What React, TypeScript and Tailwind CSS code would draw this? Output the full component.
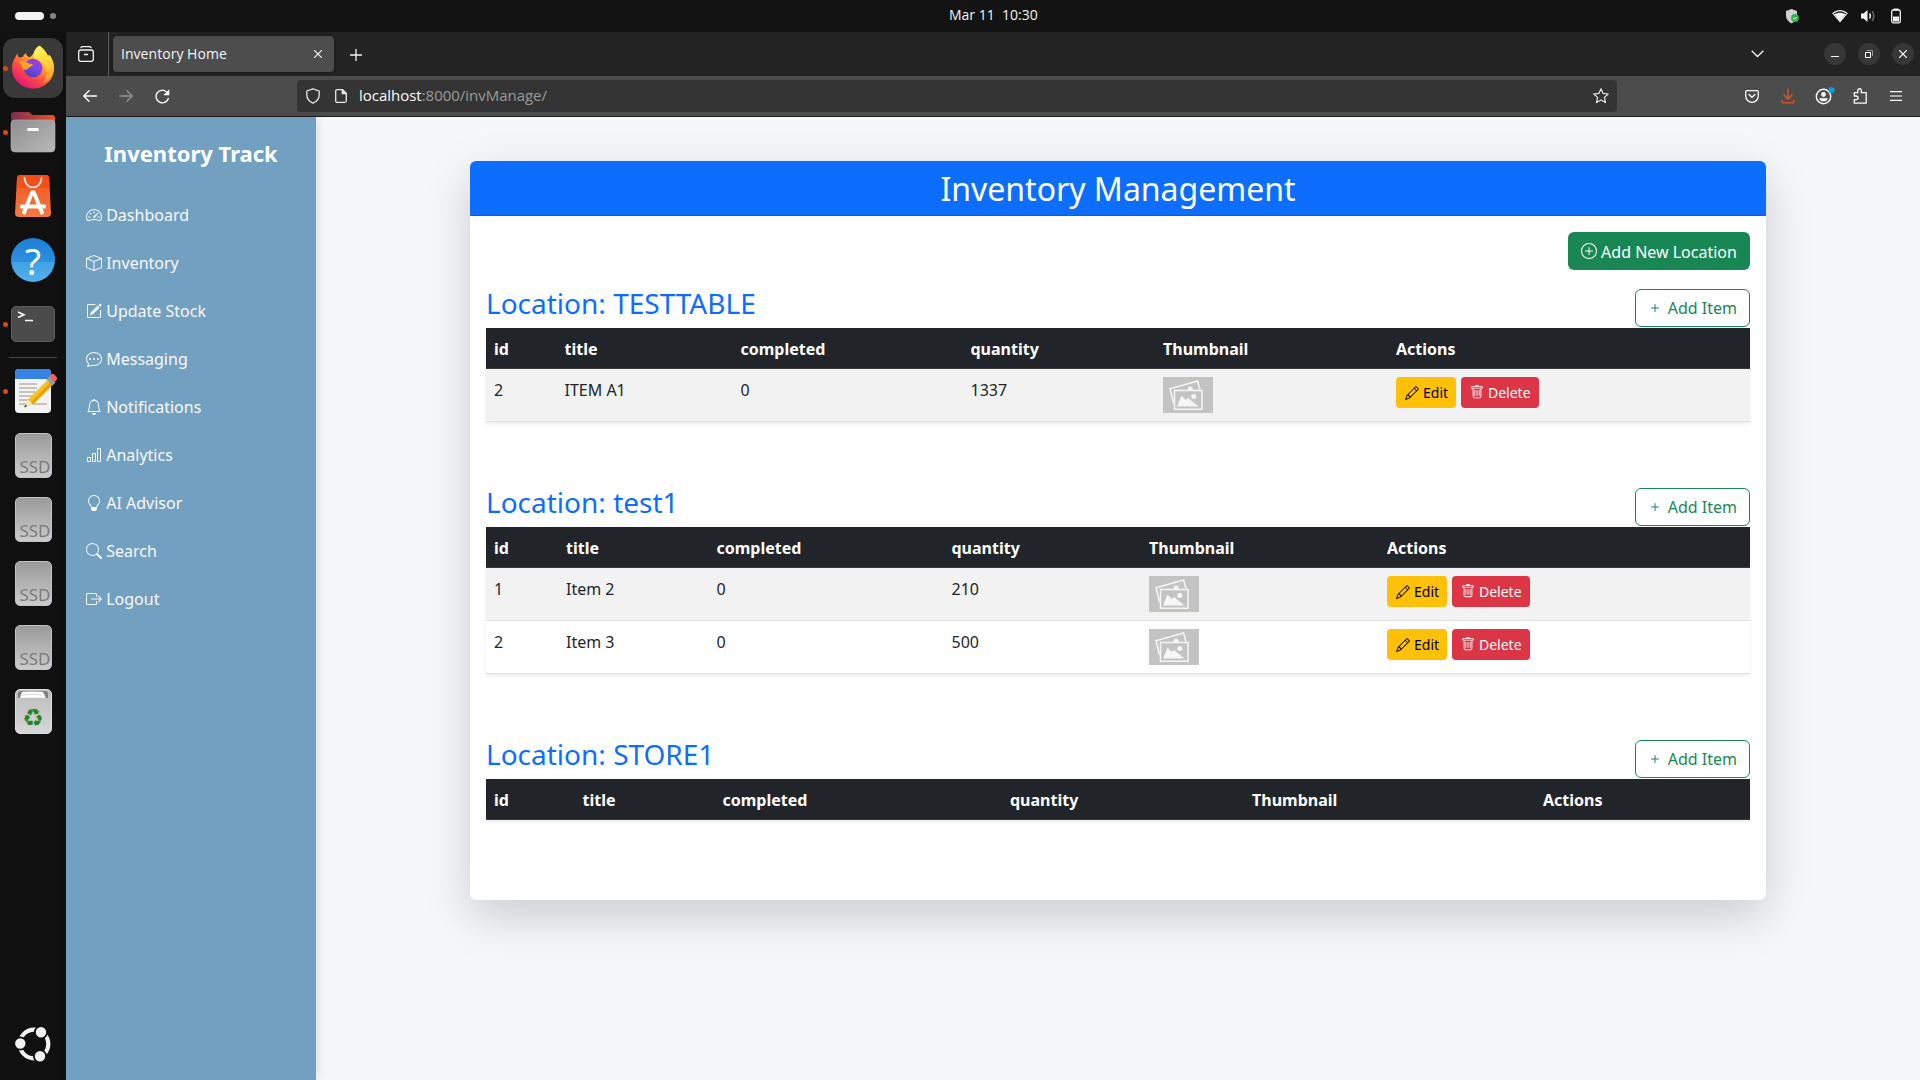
import {
  BsBarChart, BsBell, BsBoxArrowRight, BsBox, BsChatDots, BsLightbulb, BsPencil, BsPencilSquare,
  BsPlus, BsPlusCircle, BsSearch, BsSpeedometer2, BsTrash,
} from "react-icons/bs";
import type { ReactNode } from "react";

const NAV = [
  { label: "Dashboard", Icon: BsSpeedometer2 },
  { label: "Inventory", Icon: BsBox },
  { label: "Update Stock", Icon: BsPencilSquare },
  { label: "Messaging", Icon: BsChatDots },
  { label: "Notifications", Icon: BsBell },
  { label: "Analytics", Icon: BsBarChart },
  { label: "AI Advisor", Icon: BsLightbulb },
  { label: "Search", Icon: BsSearch },
  { label: "Logout", Icon: BsBoxArrowRight },
];

type Row = { id: number; title: string; completed: number; quantity: number };
type Location = { name: string; cols: number[]; rows: Row[] };

const LOCATIONS: Location[] = [
  {
    name: "TESTTABLE",
    cols: [70.5, 176, 230, 192.5, 233, 362],
    rows: [{ id: 2, title: "ITEM A1", completed: 0, quantity: 1337 }],
  },
  {
    name: "test1",
    cols: [72, 150.5, 235, 197.5, 238, 371],
    rows: [
      { id: 1, title: "Item 2", completed: 0, quantity: 210 },
      { id: 2, title: "Item 3", completed: 0, quantity: 500 },
    ],
  },
  { name: "STORE1", cols: [88.5, 140, 287.5, 242, 291, 215], rows: [] },
];

const HEADERS = ["id", "title", "completed", "quantity", "Thumbnail", "Actions"];

function TopBar() {
  return (
    <header className="flex h-8 items-center bg-[#131313] pl-[15px] pr-[19px] text-[#f2f2f2]">
      <div className="flex w-[934px] items-center gap-1.5">
        <span className="h-2 w-[29px] rounded-full bg-[#f2f2f2]" />
        <span className="size-1.5 rounded-full bg-[#858585]" />
      </div>
      <div className="w-[110px] whitespace-pre pb-[2px] text-sm leading-none">Mar 11  10:30</div>
      <div className="ml-auto flex items-center">
        <svg width="15" height="16" viewBox="0 0 15 16" className="mr-[32px]">
          <path d="M6.5 1 12 3v4.500c0 3.500-2 6-5.500 8C3 13.500 1 11 1 7.500V3z" fill="#d0d0d0" />
          <circle cx="10" cy="10" r="3.900" fill="#2fb344" />
          <path d="m8.200 10 1.300 1.200 2.200-2.300" fill="none" stroke="#fff" strokeWidth="1" />
        </svg>
        <svg width="16" height="14" viewBox="0 0 16 14" className="mr-[12px]">
          <path d="M1 4.300C5 .7 11 .7 15 4.300L8 12.500z" fill="none" stroke="#f2f2f2" strokeWidth="1.200" strokeLinejoin="round" />
          <path d="M2.700 5.200C5.500 3.200 10.500 3.200 13.300 5.200L8 12.500z" fill="#f2f2f2" />
        </svg>
        <svg width="16" height="14" viewBox="0 0 16 14" className="mr-[15px]">
          <path d="M1 4.500h2.500L7.500 1v12L3.500 9.500H1z" fill="#f2f2f2" />
          <path d="M9.500 4.500q1.800 2.500 0 5" fill="none" stroke="#f2f2f2" strokeWidth="1.400" />
          <path d="M12 2.200q3.600 4.800 0 9.600" fill="none" stroke="#6e6e6e" strokeWidth="1.400" />
        </svg>
        <svg width="10" height="16" viewBox="0 0 10 16">
          <rect x="2.500" y="0.500" width="5" height="2" fill="#f2f2f2" />
          <rect x=".7" y="2" width="8.600" height="12.800" rx="1.600" fill="none" stroke="#f2f2f2" strokeWidth="1.300" />
          <path d="M2 8.500h6v5H2z" fill="#f2f2f2" />
        </svg>
      </div>
    </header>
  );
}

function Slot({ children, active, dot, className = "" }: { children: ReactNode; active?: boolean; dot?: boolean; className?: string }) {
  return (
    <div className={"relative flex h-16 w-full shrink-0 items-center justify-center " + className}>
      {active && <span className="absolute left-[3px] top-[2px] size-[60px] rounded-xl bg-[#393939]" />}
      {dot && <span className="absolute left-[3px] top-[30px] size-[5px] rounded-full bg-[#dd4814]" />}
      <span className="relative flex">{children}</span>
    </div>
  );
}

function FirefoxIcon() {
  return (
    <svg width="44" height="46" viewBox="0 0 44 46" className="mb-[2px]">
      <defs>
        <linearGradient id="fxBody" x1=".85" y1=".1" x2=".25" y2=".95">
          <stop offset="0" stopColor="#fff44f" />
          <stop offset=".35" stopColor="#ffa930" />
          <stop offset=".65" stopColor="#ff4f3d" />
          <stop offset="1" stopColor="#e5157a" />
        </linearGradient>
        <linearGradient id="fxGlobe" x1=".7" y1="0" x2=".3" y2="1">
          <stop offset="0" stopColor="#a938d8" />
          <stop offset=".5" stopColor="#7547ee" />
          <stop offset="1" stopColor="#4a3fb5" />
        </linearGradient>
        <linearGradient id="fxFlame" x1=".4" y1="0" x2=".7" y2="1">
          <stop offset="0" stopColor="#fff25a" />
          <stop offset=".6" stopColor="#ffcb36" />
          <stop offset="1" stopColor="#ff9126" />
        </linearGradient>
      </defs>
      <path d="M6 9.500c.5 2 1.300 3.300 2.700 4.200 1.300-.8 2.600-1.200 4-1.300C11.300 12.300 14 10 15 9c.2 2.500 1.800 4 4 4.300L29 3c6 4 8 8 8.500 10l1.200-2C42 16 43 20 43 24.500 43 36 33.500 44.500 22 44.500S1 35.500 1 24c0-5 1.500-8.500 3.500-11z" fill="url(#fxBody)" />
      <path d="M28.500 1.500c3.500 2.500 7.500 7 8.300 11.500l1-2.500C42 15 43.500 22 42.500 27c-1.500 7-6.500 11-11.500 12 4-3 5.500-8 4.500-13-1-5-4-8-8-9.500-3-1-5-2-5-5.500 0-4 3-8 6-9.500z" fill="url(#fxFlame)" />
      <circle cx="22" cy="24" r="9.300" fill="url(#fxGlobe)" />
      <path d="M8 18c3-1.300 5.500-1 8 .5 2.500 1.600 4 1.500 6 1.700-.5 2-3.500 2.500-4.500 3.800-1.500 2.200-4.500 2-5.500 1.500C11 21 9 19.500 8 18z" fill="#ffa52b" />
    </svg>
  );
}

function FilesIcon() {
  return (
    <svg width="46" height="42" viewBox="0 0 46 42">
      <defs>
        <linearGradient id="fBack" x1="0" x2="1"><stop offset="0" stopColor="#7e2a55" /><stop offset="1" stopColor="#e95420" /></linearGradient>
        <linearGradient id="fFront" x1="0" y1="0" x2="1" y2="1"><stop offset="0" stopColor="#8e8e8e" /><stop offset="1" stopColor="#b9b9b9" /></linearGradient>
      </defs>
      <path d="M1 14V4a3 3 0 0 1 3-3h14q2 0 3 1.500T24 4h18a3 3 0 0 1 3 3v8z" fill="url(#fBack)" />
      <rect x="1" y="9" width="44" height="32" rx="4" fill="url(#fFront)" stroke="#b5b5b5" strokeWidth=".6" />
      <rect x="17" y="17" width="12" height="3" rx="1.500" fill="#fff" />
    </svg>
  );
}

function StoreIcon() {
  return (
    <svg width="36" height="42" viewBox="0 0 36 42">
      <defs><linearGradient id="bag" x1="0" y1="0" x2="0" y2="1"><stop offset="0" stopColor="#f4511e" /><stop offset="1" stopColor="#f37b43" /></linearGradient></defs>
      <path d="M5 0h26q3 0 3.200 3L36 38q0 4-4 4H4q-4 0-4-4L2 3Q2 0 5 0z" fill="url(#bag)" />
      <path d="M2 2.500Q2.200 0 5 0h26q2.800 0 3.200 2.500L34.500 13H1.500z" fill="#f04a12" opacity=".6" />
      <path d="M9.500 2.500c0 13 17 13 17 0" fill="none" stroke="#f9e6dd" strokeWidth="1.700" strokeLinecap="round" />
      <path d="M8.500 39 17 17.500h2L27.500 39" fill="none" stroke="#fff" strokeWidth="3.800" strokeLinejoin="round" />
      <rect x="5" y="29.500" width="26" height="4" rx="1.500" fill="#fff" />
    </svg>
  );
}

function HelpIcon() {
  return (
    <span className="flex size-11 items-center justify-center rounded-full bg-[linear-gradient(#1c7fd6_0%,#2a90df_54%,#3fa2e3_55%,#53b1ec_100%)] pt-px font-['Noto_Sans'] text-[37px] leading-none text-white">?</span>
  );
}

function TerminalIcon() {
  return (
    <span className="flex h-9 w-11 rounded-[5px] border border-[#5e5e5e] bg-[#4b4b4b] pl-[5px] pt-[3px]">
      <svg width="16" height="13" viewBox="0 0 16 13" fill="none" stroke="#fff" strokeWidth="1.600">
        <path d="m1 2 6 2.700L1 7.500M8 10.500h8" />
      </svg>
    </span>
  );
}

function EditorIcon() {
  return (
    <svg width="44" height="46" viewBox="0 0 44 46">
      <rect x="1" y="1" width="36" height="44" rx="4" fill="#f3f3f3" />
      <path d="M1 11V5a4 4 0 0 1 4-4h28a4 4 0 0 1 4 4v6z" fill="#3584e4" />
      <path d="M5 16h18M5 20h18M5 24h16M5 28h13M5 32h11M5 36h28" stroke="#c9c4b8" strokeWidth="1.800" />
      <path d="m14 31.500 20.500-20.500 5 5L19 36.500z" fill="#f6c31c" />
      <path d="m17 34 20-20.500 2.500 2.500L19 36.500z" fill="#e5a50a" />
      <path d="m14 31.500 5 5-9 3z" fill="#f8e6ac" />
      <path d="m11.500 36.500 1.700 1.800-3.200 1.200z" fill="#3d3846" />
      <path d="m32.500 11.500 3-3 6 6-3 3z" fill="#9a9996" />
      <path d="m35 8.500 1.500-2q2-1.500 4 .300l1.500 1.500q2 2 .2 4l-1.700 1.700z" fill="#f66060" />
    </svg>
  );
}

function SsdIcon() {
  return (
    <span className="flex h-[45px] w-[37px] items-end justify-end rounded-[5px] border border-[#c4c4c4] bg-linear-to-b from-[#9a9a9a] to-[#cbcbcb] pb-[2px] font-['Noto_Sans'] text-[17px] leading-none text-[#7c7c7c]">
      SSD
    </span>
  );
}

function TrashIcon() {
  return (
    <span className="flex h-[45px] w-[37px] flex-col items-center rounded-[5px] border border-[#e0e0e0] bg-linear-to-b from-[#bdbdbd] to-[#d6d6d6]">
      <svg width="30" height="9" viewBox="0 0 30 9">
        <path d="M0 8V4q0-3 3-3h24q3 0 3 3v4z" fill="#7d7d7d" />
        <path d="M2 8 4 2q10-1 21 0l3 6z" fill="#fff" stroke="#c8c8c8" strokeWidth=".6" />
        <path d="M4 5q10-1.500 20 0" fill="none" stroke="#bbb" strokeWidth=".6" />
      </svg>
      <span className="mt-[8px] font-['DejaVu_Sans'] text-[24px] leading-[22px] text-[#26871e]">♻</span>
    </span>
  );
}

function UbuntuLogo() {
  return (
    <svg width="38" height="38" viewBox="0 0 38 38">
      <circle cx="20" cy="19" r="14.300" fill="none" stroke="#f2f2f2" strokeWidth="4.200" />
      <g fill="#f2f2f2" stroke="#101010" strokeWidth="1.800">
        <circle cx="6.300" cy="18.500" r="6.100" />
        <circle cx="27" cy="7.200" r="6.100" />
        <circle cx="26" cy="31.200" r="6.100" />
      </g>
    </svg>
  );
}

function Dock() {
  return (
    <aside className="flex w-[66px] shrink-0 flex-col items-center bg-[#101010] pt-1">
      <Slot active dot><FirefoxIcon /></Slot>
      <Slot dot><FilesIcon /></Slot>
      <Slot><StoreIcon /></Slot>
      <Slot><HelpIcon /></Slot>
      <Slot dot><TerminalIcon /></Slot>
      <span className="mb-px mt-[1px] h-px w-12 shrink-0 bg-[#4a4a4a]" />
      <Slot dot><span className="mb-px ml-[6px] flex"><EditorIcon /></span></Slot>
      <Slot><SsdIcon /></Slot>
      <Slot><SsdIcon /></Slot>
      <Slot><SsdIcon /></Slot>
      <Slot><SsdIcon /></Slot>
      <Slot><TrashIcon /></Slot>
      <div className="mb-[17px] mr-px mt-auto"><UbuntuLogo /></div>
    </aside>
  );
}

function TabStrip() {
  return (
    <div className="flex h-11 items-center bg-[#232323] pr-[6px] text-[#f4f4f4]">
      <div className="flex h-full w-[43px] items-center justify-center border-r border-[#5c5c5c] pr-[2px]">
        <svg width="16" height="16" viewBox="0 0 16 16" fill="none" stroke="#f4f4f4" strokeWidth="1.300" strokeLinecap="round">
          <path d="M3 1.600Q3.500.7 4.500.7h7q1 0 1.500.9" />
          <rect x=".7" y="4" width="14.600" height="11.300" rx="2" />
          <path d="M6.500 8.500h3" />
        </svg>
      </div>
      <div className="ml-1 flex h-9 w-[221px] items-center justify-between rounded bg-[#4d4d4d] pl-2 pr-[12px] shadow-[0_0_3px_rgba(0,0,0,0.5)]">
        <span className="text-sm tracking-[0.04px]">Inventory Home</span>
        <svg width="8" height="8" viewBox="0 0 8 8" stroke="#f4f4f4" strokeWidth="1.100"><path d="m0 0 8 8M8 0 0 8" /></svg>
      </div>
      <svg width="12" height="12" viewBox="0 0 12 12" stroke="#f4f4f4" strokeWidth="1.300" className="ml-[16px] mt-px"><path d="M6 0v12M0 6h12" /></svg>
      <svg width="13" height="8" viewBox="0 0 13 8" fill="none" stroke="#f4f4f4" strokeWidth="1.300" className="ml-auto mr-[60px]"><path d="m.7.7 5.800 5.800L12.300.7" /></svg>
      <div className="flex gap-3">
        <span className="flex size-[22px] items-center justify-center rounded-full bg-[#373737]"><span className="mt-[5px] h-px w-2 bg-white" /></span>
        <span className="flex size-[22px] items-center justify-center rounded-full bg-[#373737]">
          <svg width="8" height="8" viewBox="0 0 8 8" fill="none"><path d="M.5 2.500h5v5h-5z" stroke="#fff" /><path d="M2 .5h5.500V6" stroke="#999" /></svg>
        </span>
        <span className="flex size-[22px] items-center justify-center rounded-full bg-[#373737]">
          <svg width="8" height="8" viewBox="0 0 8 8" stroke="#fff" strokeWidth="1.200"><path d="m0 0 8 8M8 0 0 8" /></svg>
        </span>
      </div>
    </div>
  );
}

function NavBar() {
  return (
    <div className="flex h-[41px] items-center border-b border-[#1b1b1b] bg-[#4c4c4c] pl-[17px] pr-[18px]">
      <div className="flex w-[214px] items-center gap-[22px]">
        <svg width="14" height="12" viewBox="0 0 14 12" fill="none" stroke="#fbfbfb" strokeWidth="1.400" strokeLinecap="round"><path d="M13.500 6H1M6 .8.800 6 6 11.200" /></svg>
        <svg width="14" height="12" viewBox="0 0 14 12" fill="none" stroke="#929292" strokeWidth="1.400" strokeLinecap="round"><path d="M.500 6H13M8 .8 13.200 6 8 11.200" /></svg>
        <svg width="15" height="15" viewBox="0 0 15 15" fill="none" stroke="#fbfbfb" strokeWidth="1.400"><path d="M13.500 9A6.300 6.300 0 1 1 11.500 2.800" /><path d="M14.300.3v6H8.300z" fill="#fbfbfb" stroke="none" /></svg>
      </div>
      <div className="flex h-8 w-[1320px] items-center rounded bg-[#343434] pl-[9px] pr-2 text-[15px] text-[#fbfbfb]">
        <svg width="14" height="16" viewBox="0 0 14 16" fill="none" stroke="#e8e8e8" strokeWidth="1.300" strokeLinejoin="round"><path d="M7 .8 13.200 3v3.500c0 4-2.200 7-6.200 8.700C3 13.500.8 10.500.8 6.500V3z" /></svg>
        <svg width="12" height="14" viewBox="0 0 12 14" fill="none" stroke="#e8e8e8" strokeWidth="1.300" strokeLinejoin="round" className="ml-[15px]"><path d="M2.200.7h5.300l3.800 3.800v7.300q0 1.500-1.500 1.500H2.200q-1.500 0-1.500-1.500V2.200Q.7.700 2.200.7z" /><path d="M7.300.7v4h4z" fill="#e8e8e8" /></svg>
        <span className="mb-[2px] ml-[12px] tracking-[-0.02px]">localhost<span className="text-[#9a9a9a]">:8000/invManage/</span></span>
        <svg width="16" height="16" viewBox="0 0 16 16" fill="none" stroke="#e8e8e8" strokeWidth="1.200" strokeLinejoin="round" className="ml-auto"><path d="m8 .8 2.100 4.600 5.100.6-3.800 3.400 1.100 5.200L8 12.100l-4.500 2.500 1.100-5.200L.8 6l5.100-.6z" /></svg>
      </div>
      <div className="ml-auto flex items-center">
        <svg width="14" height="13" viewBox="0 0 14 13" fill="none" stroke="#fbfbfb" strokeWidth="1.300" strokeLinecap="round" strokeLinejoin="round"><path d="M2 .7h10q1.300 0 1.300 1.300v4A6.300 6.300 0 0 1 .7 6V2Q.7.700 2 .7z" /><path d="M4 4.500 7 7.300l3-2.800" /></svg>
        <svg width="14" height="16" viewBox="0 0 14 16" fill="none" stroke="#e95420" strokeWidth="1.300" strokeLinecap="round" className="ml-[22px]"><path d="M7 .8v10M2.800 6.800 7 11l4.200-4.200M.8 12.500q0 2.300 1.700 2.300h9q1.700 0 1.700-2.300" /></svg>
        <svg width="20" height="18" viewBox="0 0 20 18" className="mb-px ml-[20px]">
          <circle cx="8.500" cy="9.500" r="7.200" fill="none" stroke="#fbfbfb" strokeWidth="1.400" />
          <circle cx="8.500" cy="7.500" r="2.400" fill="#fbfbfb" />
          <path d="M4.200 11.300h8.600q-1 3.200-4.300 3.200t-4.300-3.200z" fill="#fbfbfb" />
          <circle cx="16.500" cy="3" r="3" fill="#00a2f2" />
        </svg>
        <svg width="14" height="16" viewBox="0 0 14 16" fill="none" stroke="#fbfbfb" strokeWidth="1.300" strokeLinejoin="round" className="ml-[18px]"><path d="M1.300 8V4.700h3.500V2.500a1.700 1.700 0 0 1 3.500 0v2.200h4.900v10.500H1.300v-3.500h1.900a1.800 1.800 0 0 0 0-3.700z" /></svg>
        <svg width="12" height="10" viewBox="0 0 12 10" stroke="#fbfbfb" strokeWidth="1.200" className="ml-[23px]"><path d="M0 .6h12M0 5h12M0 9.400h12" /></svg>
      </div>
    </div>
  );
}

function Thumbnail() {
  return (
    <svg width="50" height="36" viewBox="0 0 50 36" className="block">
      <path d="M0 0h50v36H0z" fill="#c3c3c3" />
      <g fill="none" stroke="#f6f6f4" strokeWidth="1.500">
        <path d="M10.500 26 7 11.800 34.500 4l2.500 8.500" />
        <path d="M11.500 13.500h27.500v18.800H11.500z" />
      </g>
      <path d="M24.500 13a2.700 2.700 0 1 1 5.200 0zM14 29.500l4.500-11 4.200 4.500 2.300-2 10.500 8.500z" fill="#f6f6f4" />
      <circle cx="30.800" cy="19.500" r="2.500" fill="#f6f6f4" />
    </svg>
  );
}

function TextCell({ children }: { children: ReactNode }) {
  return <td className="border-b border-[#dee2e6] px-2 pb-[7px] pt-[9px] leading-6">{children}</td>;
}

function LocationSection({ name, cols, rows }: Location) {
  return (
    <section className="mb-[63.4px]">
      <div className="flex h-[41.6px] items-start justify-between">
        <h3 className="pt-px text-[28px] leading-[33.6px] text-[#0d6efd]">Location: {name}</h3>
        <button className="mt-[2.2px] flex h-[38px] w-[115px] items-center justify-end rounded-md border border-[#198754] pr-3 text-[#198754]">
          <BsPlus className="mr-[4.5px]" />
          <span className="pt-px leading-6">Add Item</span>
        </button>
      </div>
      <table className="w-full table-fixed border-separate border-spacing-0 text-left shadow-[0_2px_4px_rgba(0,0,0,0.075)]">
        <colgroup>
          {cols.map((w, i) => <col key={i} style={{ width: w }} />)}
        </colgroup>
        <thead>
          <tr className="bg-[#212529] text-white">
            {HEADERS.map((h) => <th key={h} className="border-b border-[#373b3e] px-2 pb-[7px] pt-[9px] font-bold leading-6">{h}</th>)}
          </tr>
        </thead>
        <tbody>
          {rows.map((r) => (
            <tr key={r.id} className="align-top odd:bg-[#f2f2f2]">
              <TextCell>{r.id}</TextCell>
              <TextCell>{r.title}</TextCell>
              <TextCell>{r.completed}</TextCell>
              <TextCell>{r.quantity}</TextCell>
              <td className="border-b border-[#dee2e6] p-2"><Thumbnail /></td>
              <td className="border-b border-[#dee2e6] p-2">
                <div className="flex gap-[5px] text-sm">
                  <button className="flex h-[31px] w-[60px] items-center rounded bg-[#ffc107] pl-[9px] pt-px text-black"><BsPencil className="mr-[4px]" />Edit</button>
                  <button className="flex h-[31px] w-[78px] items-center rounded bg-[#dc3545] pl-[9px] pt-px text-white"><BsTrash className="mb-[2px] mr-[4px]" />Delete</button>
                </div>
              </td>
            </tr>
          ))}
        </tbody>
      </table>
    </section>
  );
}

export default function App() {
  return (
    <div className="flex h-[1080px] w-[1920px] flex-col overflow-hidden font-['Open_Sans',sans-serif]">
      <TopBar />
      <div className="flex min-h-0 flex-1">
        <Dock />
        <div className="flex min-w-0 flex-1 flex-col">
          <TabStrip />
          <NavBar />
          <div className="flex min-h-0 flex-1 bg-[#f5f7fb] font-['Noto_Sans',sans-serif] text-base text-[#212529]">
            <nav className="z-10 w-[250px] shrink-0 bg-[#72a0c1] pt-[19px] text-[#f8f9fa] shadow-[2px_0_10px_rgba(0,0,0,0.1)]">
              <h4 className="mb-[21px] text-center text-[22px] font-bold leading-[34px] text-white">Inventory Track</h4>
              {NAV.map(({ label, Icon }) => (
                <a key={label} className="flex h-12 items-center gap-[4.2px] pl-5">
                  <Icon />
                  <span className="leading-6">{label}</span>
                </a>
              ))}
            </nav>
            <main className="flex-1 pl-[154px] pt-11">
              <div className="w-[1296px] rounded-md bg-white shadow-[0_16px_48px_rgba(0,0,0,0.175)]">
                <h2 className="flex h-[55px] items-center justify-center rounded-t-md border-b border-[#0b5ed7] bg-[#0d6efd] pt-[2px] text-[32px] leading-none text-white">Inventory Management</h2>
                <div className="px-4 pb-[17px] pt-4">
                  <div className="mb-[16.4px] flex justify-end">
                    <button className="flex h-[38px] w-[182px] items-center justify-center gap-1 rounded-md bg-[#198754] text-white">
                      <BsPlusCircle /><span className="pt-[2px] leading-6">Add New Location</span>
                    </button>
                  </div>
                  {LOCATIONS.map((l) => <LocationSection key={l.name} {...l} />)}
                </div>
              </div>
            </main>
          </div>
        </div>
      </div>
    </div>
  );
}
